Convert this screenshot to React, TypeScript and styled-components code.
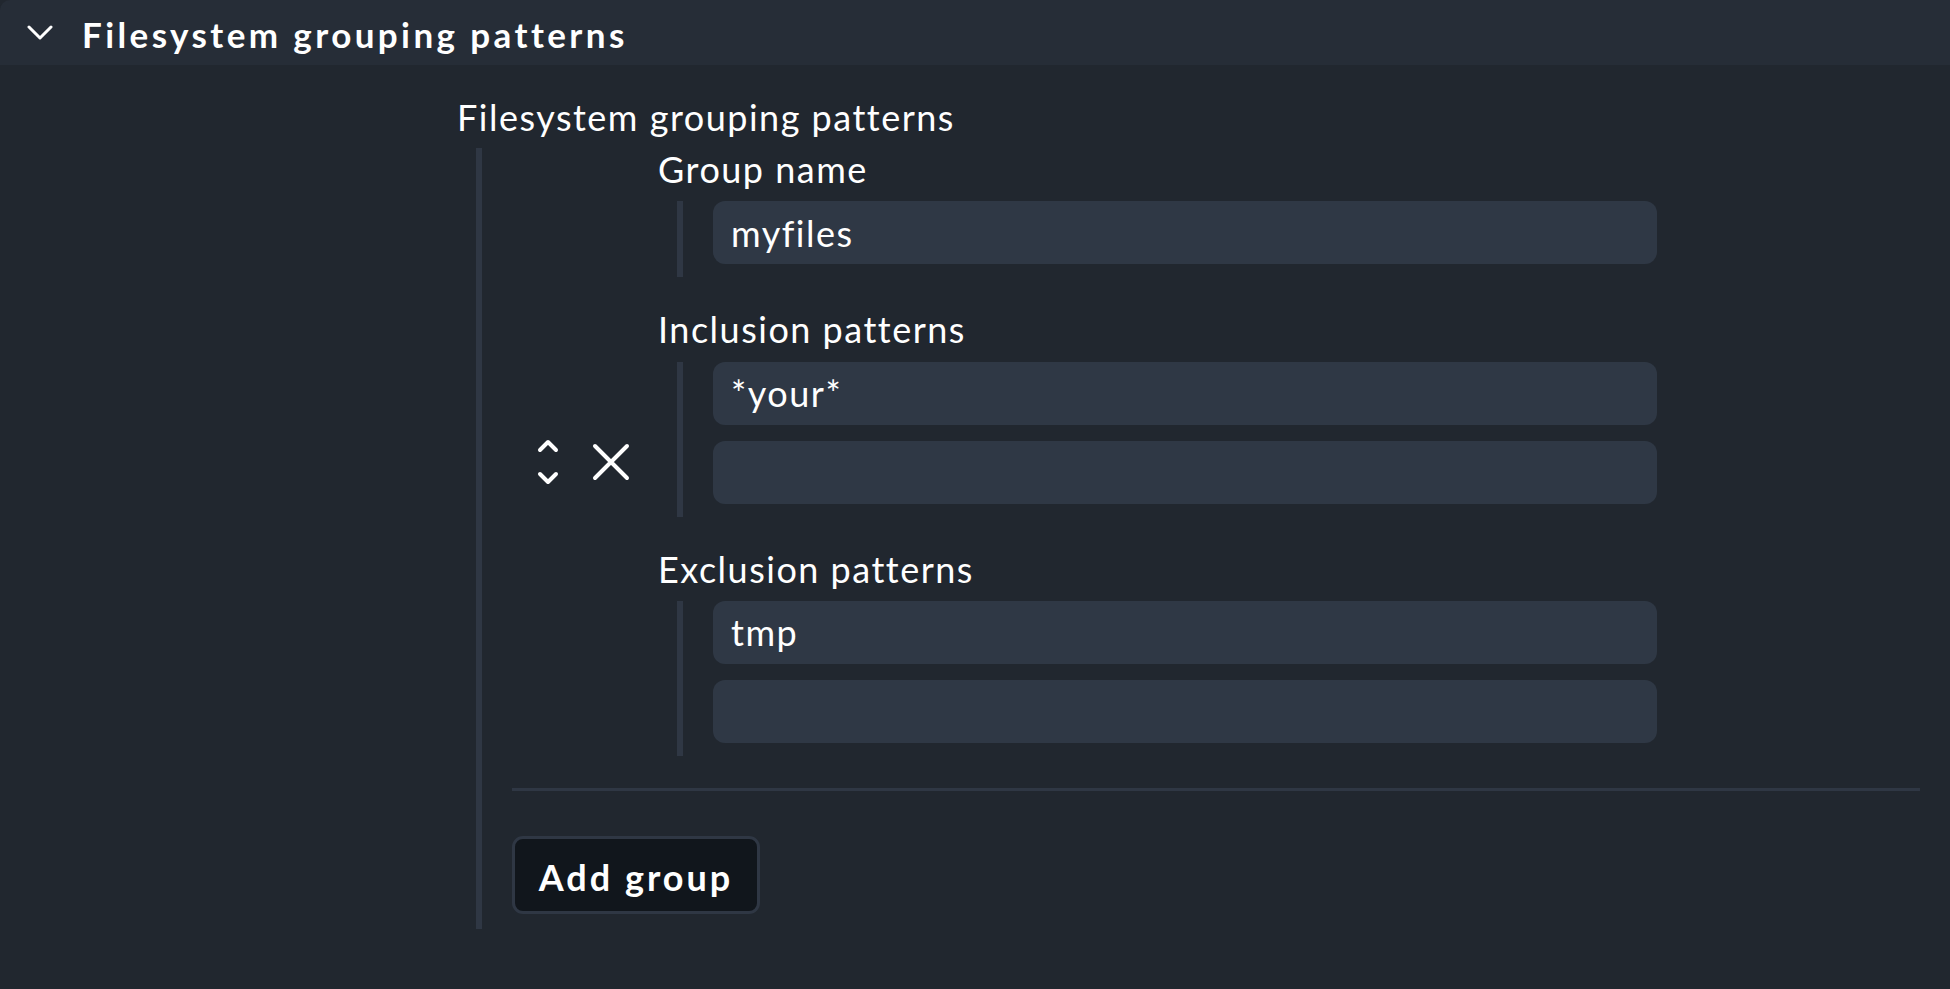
import React from "react";
import styled, { createGlobalStyle } from "styled-components";

const Global = createGlobalStyle`
  html, body { margin: 0; padding: 0; background: #21272f; }
  body { font-family: Lato, "Noto Sans", sans-serif; color: #ffffff; }
  * { box-sizing: border-box; }
`;

const Page = styled.div`
  width: 1950px;
  min-height: 989px;
  background: #21272f;
`;

const Header = styled.div`
  height: 65px;
  background: #262d37;
  display: flex;
  align-items: center;
  padding-left: 27px;
  gap: 29px;
  border-top-left-radius: 10px;
`;

const HeaderTitle = styled.h2`
  margin: 0;
  padding-top: 2px;
  font-size: 35px;
  font-weight: 700;
  letter-spacing: 3.4px;
  line-height: 1.2;
  color: #ffffff;
`;

const Body = styled.div`
  padding: 31px 30px 0 457px;
`;

const Subtitle = styled.div`
  font-size: 36px;
  line-height: 1.2;
  letter-spacing: 1.5px;
  margin-bottom: 9px;
`;

const Outer = styled.div`
  margin-left: 19px;
  border-left: 6px solid #2f3744;
  padding-left: 30px;
  padding-bottom: 15px;
`;

const Row = styled.div`
  display: flex;
  align-items: center;
  padding-bottom: 19px;
`;

const Controls = styled.div`
  width: 146px;
  flex: none;
  padding-left: 25px;
  padding-top: 20px;
  display: flex;
  align-items: center;
  gap: 33px;
`;

const Fields = styled.div`
  display: flex;
  flex-direction: column;
  gap: 31px;
`;

const Field = styled.div`
  display: flex;
  flex-direction: column;
`;

const Label = styled.div`
  font-size: 36px;
  line-height: 1.2;
  letter-spacing: 1.5px;
`;

const FieldList = styled.div`
  margin-top: 10px;
  margin-left: 19px;
  border-left: 6px solid #2f3744;
  padding-left: 30px;
  padding-bottom: 13px;
  display: flex;
  flex-direction: column;
  gap: 16px;
`;

const TextInput = styled.input`
  width: 944px;
  height: 63px;
  border: none;
  outline: none;
  border-radius: 12px;
  background: #2f3845;
  color: #ffffff;
  font-family: Lato, "Noto Sans", sans-serif;
  font-size: 36px;
  letter-spacing: 1.5px;
  padding: 0 18px;
`;

const Separator = styled.div`
  height: 3px;
  background: #2f3744;
  margin-top: 13px;
`;

const AddButton = styled.button`
  margin-top: 45px;
  width: 248px;
  height: 78px;
  border: 3px solid #2f3744;
  border-radius: 11px;
  background: #11161c;
  color: #ffffff;
  font-family: Lato, "Noto Sans", sans-serif;
  font-size: 36px;
  font-weight: 700;
  letter-spacing: 3px;
  padding: 5px 0 0 0;
  display: block;
`;

const IconButton = styled.span`
  display: flex;
  align-items: center;
  justify-content: center;
`;

const ChevronDown = () => (
  <svg width="26" height="16" viewBox="0 0 26 16" fill="none">
    <path d="M2 2 L13 13 L24 2" stroke="#fff" strokeWidth="3" strokeLinecap="round" strokeLinejoin="round" />
  </svg>
);

const UpDown = () => (
  <svg width="22" height="48" viewBox="0 0 22 48" fill="none">
    <path d="M3 12 L11 4 L19 12" stroke="#fff" strokeWidth="4" strokeLinecap="round" strokeLinejoin="round" />
    <path d="M3 36 L11 44 L19 36" stroke="#fff" strokeWidth="4" strokeLinecap="round" strokeLinejoin="round" />
  </svg>
);

const Cross = () => (
  <svg width="38" height="38" viewBox="0 0 38 38" fill="none">
    <path d="M3 3 L35 35 M35 3 L3 35" stroke="#fff" strokeWidth="4" strokeLinecap="round" />
  </svg>
);

type FieldDef = { label: string; values: string[] };

const fields: FieldDef[] = [
  { label: "Group name", values: ["myfiles"] },
  { label: "Inclusion patterns", values: ["*your*", ""] },
  { label: "Exclusion patterns", values: ["tmp", ""] },
];

export default function App() {
  return (
    <Page>
      <Global />
      <Header>
        <ChevronDown />
        <HeaderTitle>Filesystem grouping patterns</HeaderTitle>
      </Header>
      <Body>
        <Subtitle>Filesystem grouping patterns</Subtitle>
        <Outer>
          <Row>
            <Controls>
              <IconButton><UpDown /></IconButton>
              <IconButton><Cross /></IconButton>
            </Controls>
            <Fields>
              {fields.map((f) => (
                <Field key={f.label}>
                  <Label>{f.label}</Label>
                  <FieldList>
                    {f.values.map((v, i) => (
                      <TextInput key={i} defaultValue={v} readOnly />
                    ))}
                  </FieldList>
                </Field>
              ))}
            </Fields>
          </Row>
          <Separator />
          <AddButton>Add group</AddButton>
        </Outer>
      </Body>
    </Page>
  );
}
